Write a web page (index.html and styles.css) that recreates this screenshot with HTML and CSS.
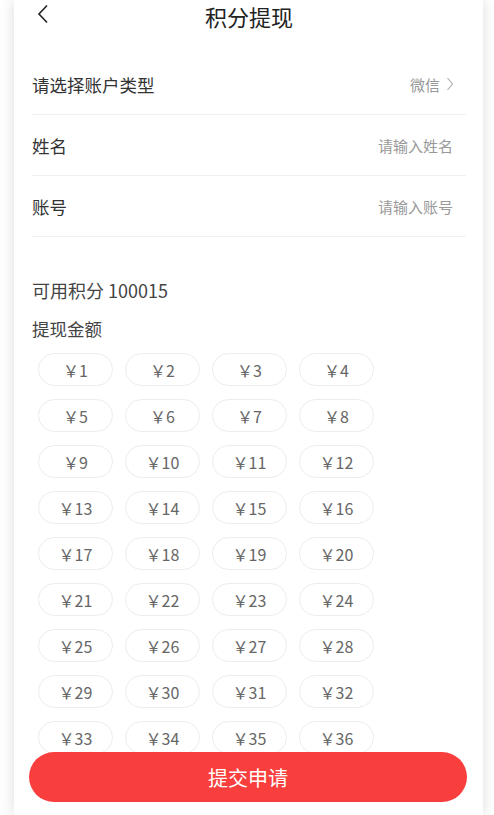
FILE: index.html
```html
<!DOCTYPE html>
<html lang="zh">
<head>
<meta charset="utf-8">
<link rel="stylesheet" href="styles.css">
</head>
<body>
<div class="page">
  <div class="header">
    <svg class="back" width="12" height="20" viewBox="0 0 12 20"><path d="M10 1.5 L2 10 L10 18.5" fill="none" stroke="#222" stroke-width="1.6"/></svg>
    <div class="title">积分提现</div>
  </div>
  <div class="form">
    <div class="row"><span class="label">请选择账户类型</span><span class="value">微信<svg class="chev" width="8" height="14" viewBox="0 0 8 14"><path d="M1.5 1 L6.5 7 L1.5 13" fill="none" stroke="#aaa" stroke-width="1.1"/></svg></span></div>
    <div class="row"><span class="label">姓名</span><span class="value">请输入姓名</span></div>
    <div class="row"><span class="label">账号</span><span class="value">请输入账号</span></div>
  </div>
  <div class="points">可用积分 100015</div>
  <div class="amount-title">提现金额</div>
  <div class="grid" id="grid"></div>
  <div class="submit">提交申请</div>
</div>
<script>
var g=document.getElementById('grid');
for(var i=1;i<=36;i++){var d=document.createElement('div');d.className='chip';d.textContent='￥'+i;g.appendChild(d);}
</script>
</body>
</html>
```
FILE: styles.css
```css
html,body{margin:0;padding:0;background:#fff;}
body{font-family:"Noto Sans CJK SC","Microsoft YaHei",sans-serif;height:815px;overflow:hidden;}
.page{width:469px;margin-left:14px;min-height:815px;background:#fff;box-shadow:0 0 14px rgba(0,0,0,0.14);padding:0 17px 0 18px;box-sizing:border-box;position:relative;}
.header{height:32px;display:flex;align-items:center;justify-content:center;position:relative;}
.back{position:absolute;left:5px;top:4px;}
.title{font-size:22px;color:#222;line-height:32px;}
.form{margin-top:22px;}
.row{height:60px;border-bottom:1px solid #f0f0f0;display:flex;align-items:center;justify-content:space-between;}
.label{font-size:17.5px;color:#333;}
.value{font-size:15px;color:#999;display:flex;align-items:center;margin-right:13px;}
.chev{margin-left:6px;margin-right:-1px;}
.points{margin-top:40px;font-size:18px;color:#444;line-height:26px;}
.amount-title{margin-top:13px;font-size:17.5px;color:#444;line-height:26px;}
.grid{margin-top:11px;padding-left:6px;display:grid;grid-template-columns:repeat(4,75px);column-gap:12px;row-gap:13px;}
.chip{height:33px;box-sizing:border-box;border:1px solid #ececec;border-radius:17px;display:flex;align-items:center;justify-content:center;font-size:16px;color:#666;}
.submit{position:fixed;left:29px;top:752px;width:438px;height:50px;border-radius:25px;background:#f93f3d;color:#fff;font-size:20px;display:flex;align-items:center;justify-content:center;}
```
